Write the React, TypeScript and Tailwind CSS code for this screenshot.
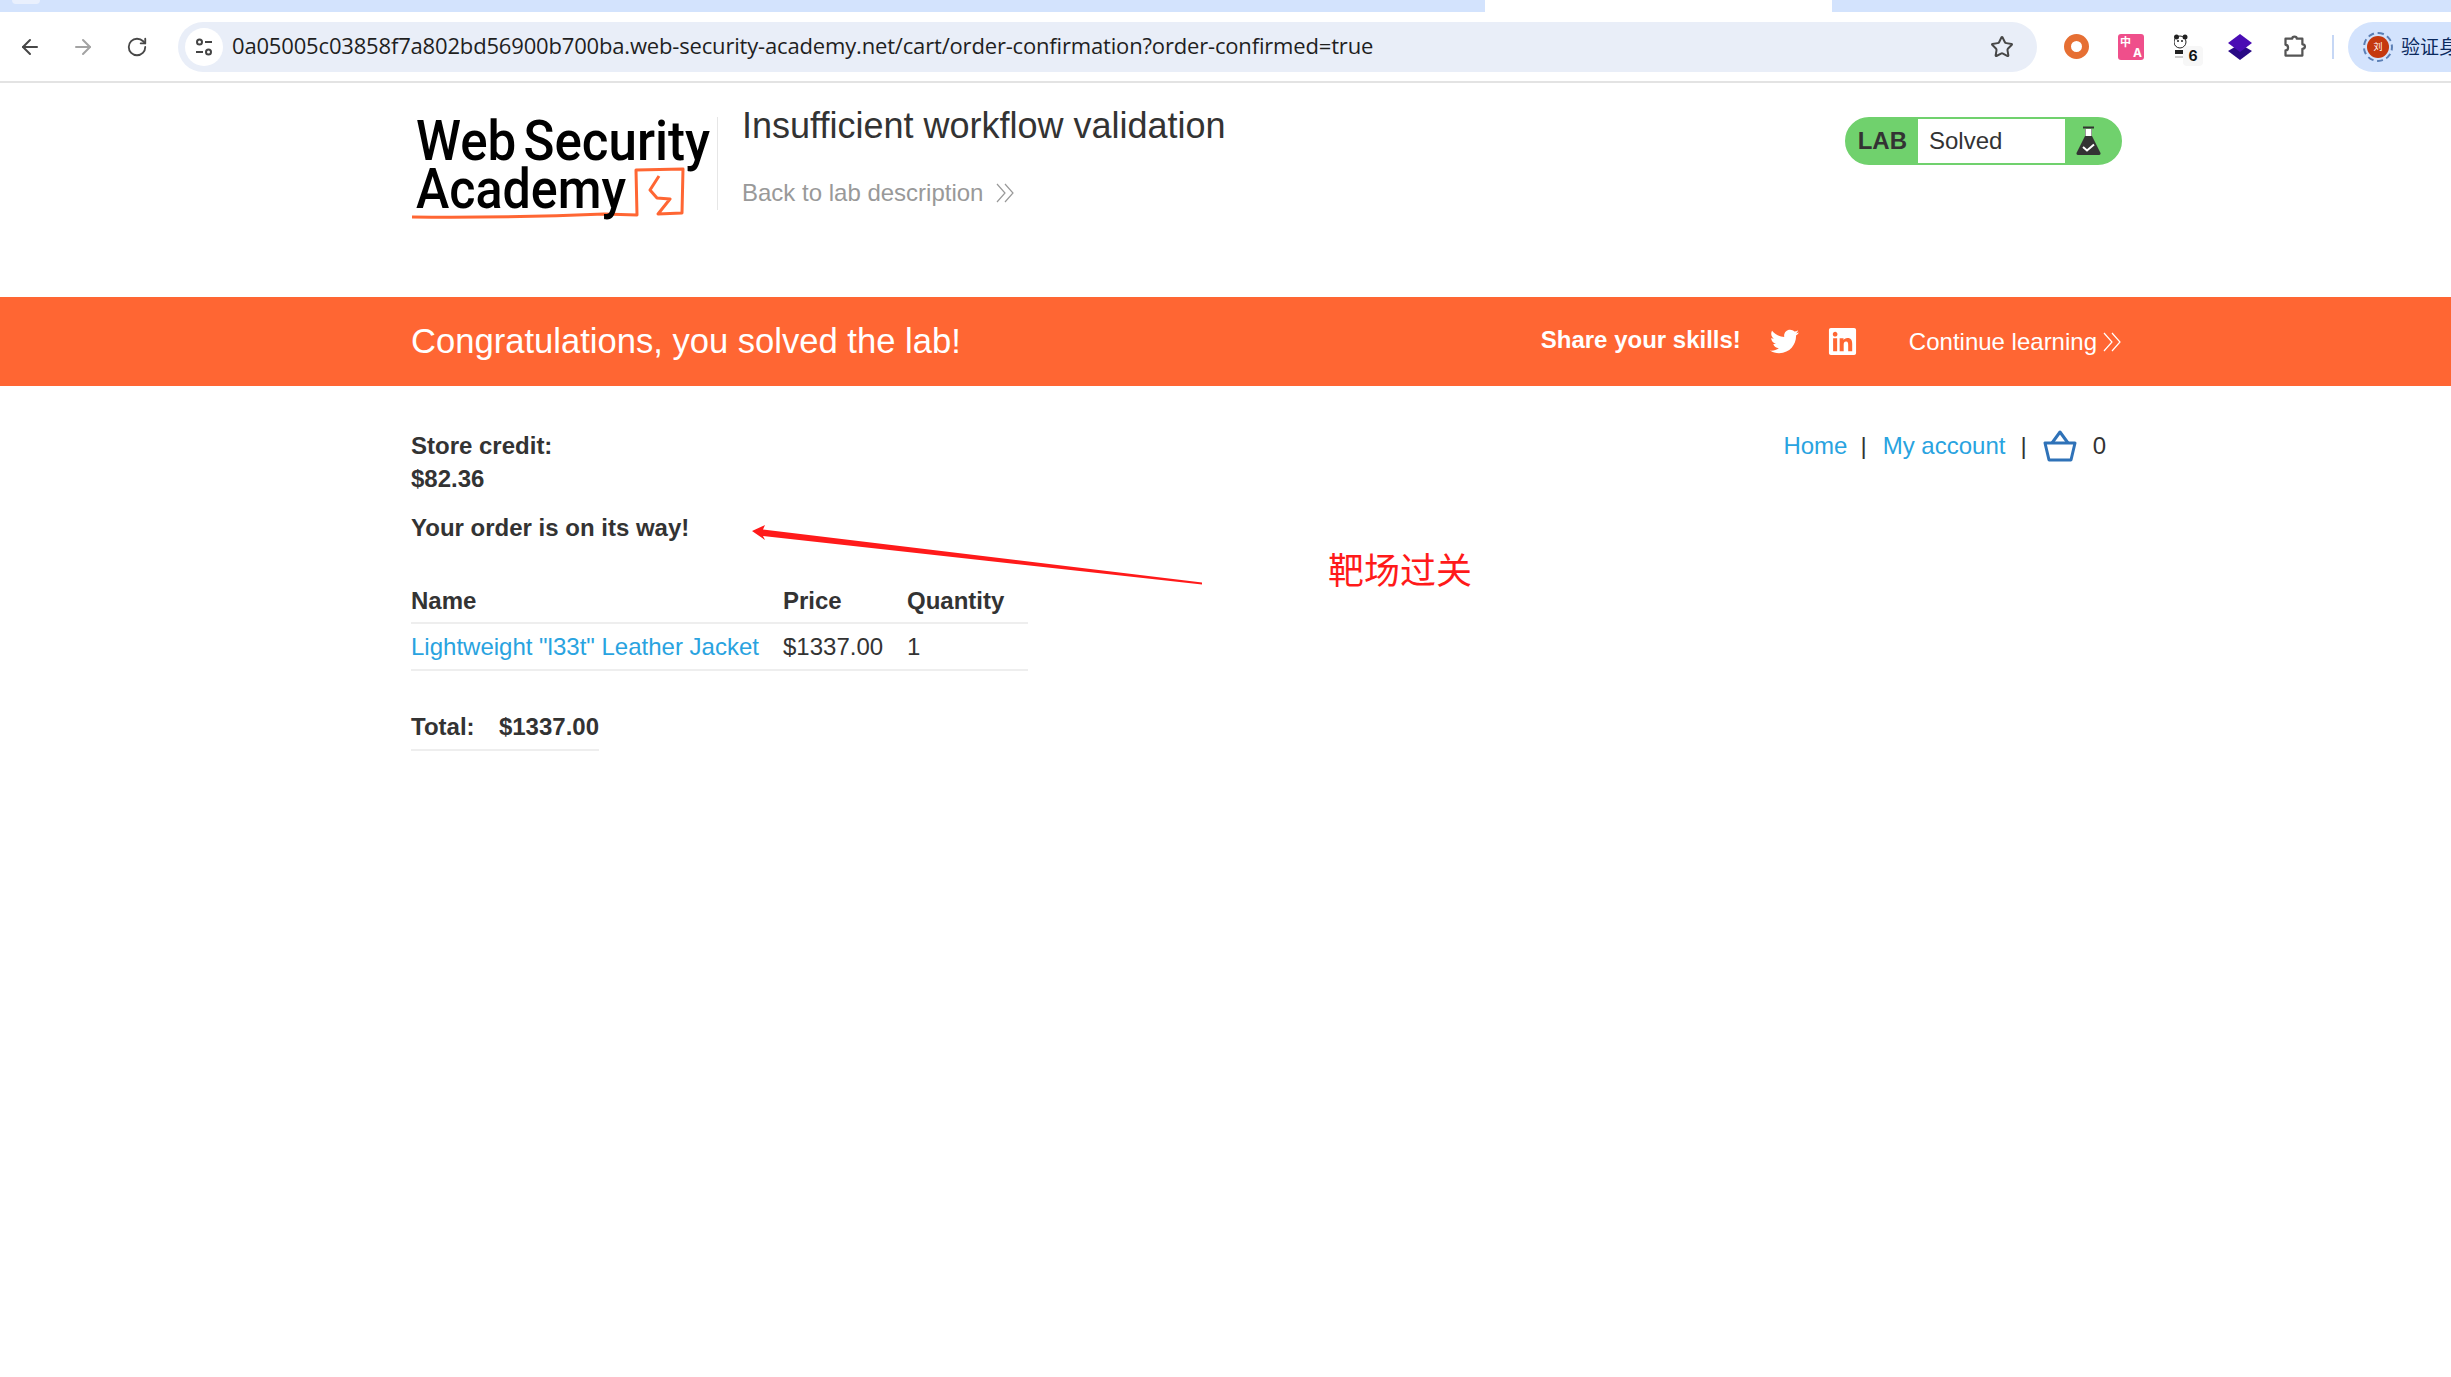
import { ArrowLeft, ArrowRight, RotateCw, Star } from "lucide-react";
import { FaTwitter, FaLinkedin } from "react-icons/fa";

const Logo = () => (
  <svg width="306" height="122" viewBox="0 0 306 122" className="shrink-0">
    <path d="M1 107 Q100 108 193 104 L226 105 L225 60 L272 59 L271 103 L247 104 L259 89 L246 88 L239 80 L248 66" fill="none" stroke="#ff6633" strokeWidth="3" strokeLinejoin="round" />
    <text x="5" y="50" textLength="294" lengthAdjust="spacingAndGlyphs" wordSpacing="-6" fontFamily="Roboto, sans-serif" fontSize="56" fontWeight="500" fill="#000">
      Web Security
    </text>
    <text x="5" y="98" textLength="210" lengthAdjust="spacingAndGlyphs" fontFamily="Roboto, sans-serif" fontSize="56" fontWeight="500" fill="#000">
      Academy
    </text>
  </svg>
);

const Chevrons = ({ className }: { className?: string }) => (
  <svg width="19" height="20" viewBox="0 0 19 20" fill="none" stroke="currentColor" strokeWidth="1.200" className={className}>
    <path d="M1 1 L9 10 L1 19" />
    <path d="M9 1 L17 10 L9 19" />
  </svg>
);

const Basket = () => (
  <svg width="34" height="34" viewBox="0 0 34 34" fill="none" stroke="#2f72b8" strokeWidth="3" strokeLinejoin="round">
    <path d="M2 14 H32 L28 31 H6 Z" />
    <path d="M9 14 L17 3 L25 14" />
  </svg>
);

const Flask = () => (
  <svg width="25" height="30" viewBox="0 0 25 30">
    <path d="M9 3 H16 V10 L24.500 27 Q25 29 22 29 H3 Q0 29 0.500 27 L9 10 Z" fill="#333" />
    <path d="M9.500 3 H15.500 V10 H9.500 Z" fill="#fff" />
    <path d="M7 1.500 H18" stroke="#333" strokeWidth="2" />
    <path d="M7 21 L11 24.500 L18 18.500" fill="none" stroke="#fff" strokeWidth="2" />
  </svg>
);

const Toolbar = () => (
  <div className="flex h-[71px] items-center rounded-tl-[12px] border-b-2 border-[#e3e3e3] bg-white">
    <div className="flex w-[178px] shrink-0 items-center pl-[18px] text-[#474747]">
      <ArrowLeft size={24} strokeWidth={2} />
      <ArrowRight size={24} strokeWidth={2} className="ml-[29px] text-[#a3a3a3]" />
      <RotateCw size={22} strokeWidth={2} className="ml-[31px]" />
    </div>
    <div className="flex h-[50px] w-[1859px] shrink-0 items-center rounded-full bg-[#e9eef8] pl-[7px] pr-[23px]">
      <div className="flex h-[38px] w-[38px] items-center justify-center rounded-full bg-white">
        <svg width="20" height="20" viewBox="0 0 20 20" fill="none" stroke="#444" strokeWidth="2">
          <circle cx="5.500" cy="5" r="2.500" />
          <path d="M11 5 H18" />
          <circle cx="14.500" cy="15" r="2.500" />
          <path d="M2 15 H9" />
        </svg>
      </div>
      <div className="mb-[2px] ml-[9px] flex-1 whitespace-nowrap font-['Open_Sans',sans-serif] text-[22px] tracking-[-0.17px] text-[#1f1f1f]">
        0a05005c03858f7a802bd56900b700ba.web-security-academy.net/cart/order-confirmation?order-confirmed=true
      </div>
      <Star size={24} strokeWidth={2} className="text-[#474747]" />
    </div>
    <div className="flex flex-1 items-center overflow-hidden">
      <div className="ml-[27px] h-[25px] w-[25px] shrink-0 rounded-full border-[7px] border-[#e66f33]" />
      <div className="relative ml-[29px] h-[26px] w-[26px] shrink-0 rounded-[3px] bg-[#ef4f8b] font-['Noto_Sans_CJK_SC',sans-serif] font-bold leading-none text-white">
        <span className="absolute left-[2px] top-[2px] text-[11px]">中</span>
        <span className="absolute bottom-[1px] right-[2px] font-['Inter',sans-serif] text-[12px]">A</span>
      </div>
      <div className="relative ml-[30px] h-[26px] w-[26px] shrink-0">
        <svg width="20" height="24" viewBox="0 0 20 24">
          <circle cx="6" cy="8" r="6" fill="#fff" stroke="#222" strokeWidth="1" />
          <circle cx="2.500" cy="3" r="2.500" fill="#222" />
          <circle cx="11" cy="3" r="2.500" fill="#222" />
          <circle cx="4" cy="7" r="1" fill="#222" />
          <circle cx="8" cy="7" r="1" fill="#222" />
          <path d="M1 16 H12 V20 H1 Z" fill="#222" />
          <path d="M1 23 H10" stroke="#999" strokeWidth="1" />
        </svg>
        <div className="absolute left-[9px] top-[12px] flex h-[20px] w-[20px] items-center justify-center rounded-[4px] bg-[#f7f7f7] font-['Inter',sans-serif] text-[14px] font-bold text-[#111]">
          6
        </div>
      </div>
      <svg width="26" height="28" viewBox="0 0 26 28" className="ml-[27px] shrink-0">
        <path d="M1 18 L13 11 L25 18 L13 27 Z" fill="#2a0a86" />
        <path d="M1 10 L13 1 L25 10 L13 19 Z" fill="#4a0cb4" />
      </svg>
      <svg width="27" height="27" viewBox="0 0 24 24" fill="none" stroke="#555" strokeWidth="2" strokeLinejoin="round" className="ml-[28px] shrink-0">
        <path d="M4 5 H10 C10 2.500 14 2.500 14 5 H19 V10 C22 10 22 14 19 14 V20 H4 V15.500 C7 15.500 7 10.500 4 10.500 Z" />
      </svg>
      <div className="ml-[24px] h-[24px] w-[2px] shrink-0 bg-[#c6d7f5]" />
      <div className="ml-[14px] flex h-[50px] w-[150px] shrink-0 items-center rounded-l-full bg-[#d3e3fd] pl-[15px]">
        <div className="flex h-[30px] w-[30px] shrink-0 items-center justify-center rounded-full border-2 border-dashed border-[#5b7fb5] p-[2px]">
          <div className="flex h-[22px] w-[22px] items-center justify-center rounded-full bg-[#c5380e] font-['Noto_Sans_CJK_SC',sans-serif] text-[9px] text-white">
            刘
          </div>
        </div>
        <span className="ml-[8px] whitespace-nowrap font-['Noto_Sans_CJK_SC',sans-serif] text-[19px] text-[#0b2a5e]">验证身份</span>
      </div>
    </div>
  </div>
);

const App = () => {
  return (
    <div className="relative h-[1377px] w-[2451px] overflow-hidden bg-white font-['Liberation_Sans',sans-serif] text-[24px] text-[#333]">
      {/* tab strip */}
      <div className="relative flex h-[12px] bg-[#d3e3fd]">
        <div className="absolute left-[12px] top-0 h-[4px] w-[28px] rounded-b-[4px] bg-[#e9f0fd]" />
        <div className="ml-[1485px] h-full w-[347px] bg-white" />
      </div>
      <Toolbar />

      {/* lab header */}
      <div className="flex h-[214px] pl-[411px] pr-[329px]">
        <div className="mt-[27px]">
          <Logo />
        </div>
        <div className="mt-[34px] h-[93px] w-px bg-[#e6e6e6]" />
        <div className="ml-[24px] mt-[21px]">
          <div className="text-[36px] leading-[44px]">Insufficient workflow validation</div>
          <div className="mt-[29px] flex items-center text-[24px] leading-[32px] text-[#999]">
            Back to lab description
            <Chevrons className="ml-[13px]" />
          </div>
        </div>
        <div className="ml-auto mt-[34px] flex h-[48px] w-[277px] rounded-full border-2 border-[#70d16d] bg-[#70d16d]">
          <div className="flex w-[71px] items-center justify-end pr-[11px] text-[24px] font-bold">LAB</div>
          <div className="flex w-[147px] items-center bg-white pl-[11px]">Solved</div>
          <div className="flex flex-1 items-center pl-[11px]">
            <Flask />
          </div>
        </div>
      </div>

      {/* solved banner */}
      <div className="flex h-[89px] items-center bg-[#ff6633] pl-[411px] pr-[329px] text-white">
        <div className="text-[34.600px]">Congratulations, you solved the lab!</div>
        <div className="ml-auto mb-[4px] font-bold">Share your skills!</div>
        <FaTwitter size={29} className="ml-[29px]" />
        <FaLinkedin size={31} className="ml-[28px]" />
        <div className="ml-[51px]">Continue learning</div>
        <Chevrons className="ml-[6px]" />
      </div>

      {/* page content */}
      <div className="pl-[411px] pr-[329px] pt-[43px] leading-[33px]">
        <div className="flex justify-between">
          <div className="font-bold">
            <div>Store credit:</div>
            <div>$82.36</div>
          </div>
          <div className="flex h-[33px] items-center pr-[16px]">
            <a className="text-[#29a3e0]">Home</a>
            <span className="ml-[13px]">|</span>
            <a className="ml-[16px] text-[#29a3e0]">My account</a>
            <span className="ml-[15px]">|</span>
            <span className="ml-[16px]">
              <Basket />
            </span>
            <span className="ml-[16px]">0</span>
          </div>
        </div>
        <div className="mt-[16px] font-bold">Your order is on its way!</div>

        <table className="mt-[40px] w-[617px] table-fixed border-collapse">
          <thead>
            <tr className="border-b-2 border-[#eee] text-left">
              <th className="w-[372px] pb-[5px] font-bold">Name</th>
              <th className="w-[124px] pb-[5px] font-bold">Price</th>
              <th className="pb-[5px] font-bold">Quantity</th>
            </tr>
          </thead>
          <tbody>
            <tr className="border-b-2 border-[#eee]">
              <td className="h-[47px] whitespace-nowrap text-[#29a3e0]">Lightweight "l33t" Leather Jacket</td>
              <td>$1337.00</td>
              <td>1</td>
            </tr>
          </tbody>
        </table>

        <div className="mt-[39px] flex w-[188px] border-b-2 border-[#eee] pb-[6px] font-bold">
          <span className="w-[88px]">Total:</span>
          <span>$1337.00</span>
        </div>
      </div>

      {/* hand drawn annotation on top of the screenshot */}
      <svg width="740" height="60" viewBox="0 0 740 60" className="absolute left-[745px] top-[525px]">
        <path d="M7 6 L20 0 L18 4.500 L457 57.500 L457 59.500 L18 11 L20 15 Z" fill="#ff1a1a" />
      </svg>
      <div className="absolute left-[1328px] top-[541px] font-['Noto_Sans_CJK_SC',sans-serif] text-[36px] leading-[54px] text-[#ff1a1a]">
        靶场过关
      </div>
    </div>
  );
};

export default App;
